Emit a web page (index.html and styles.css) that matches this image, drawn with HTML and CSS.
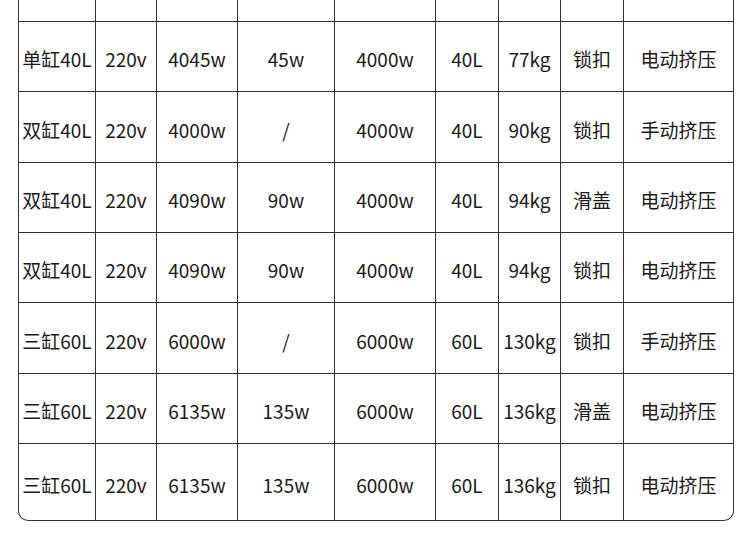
FILE: index.html
```html
<!DOCTYPE html>
<html lang="zh-CN">
<head>
<meta charset="utf-8">
<link rel="stylesheet" href="styles.css">
</head>
<body>
<div class="tbl">
  <div class="row top"><div></div><div></div><div></div><div></div><div></div><div></div><div></div><div></div><div></div></div>
  <div class="row h70"><div>单缸40L</div><div>220v</div><div>4045w</div><div>45w</div><div>4000w</div><div>40L</div><div>77kg</div><div>锁扣</div><div>电动挤压</div></div>
  <div class="row h71"><div>双缸40L</div><div>220v</div><div>4000w</div><div>/</div><div>4000w</div><div>40L</div><div>90kg</div><div>锁扣</div><div>手动挤压</div></div>
  <div class="row h70"><div>双缸40L</div><div>220v</div><div>4090w</div><div>90w</div><div>4000w</div><div>40L</div><div>94kg</div><div>滑盖</div><div>电动挤压</div></div>
  <div class="row h70"><div>双缸40L</div><div>220v</div><div>4090w</div><div>90w</div><div>4000w</div><div>40L</div><div>94kg</div><div>锁扣</div><div>电动挤压</div></div>
  <div class="row h71"><div>三缸60L</div><div>220v</div><div>6000w</div><div>/</div><div>6000w</div><div>60L</div><div>130kg</div><div>锁扣</div><div>手动挤压</div></div>
  <div class="row h70"><div>三缸60L</div><div>220v</div><div>6135w</div><div>135w</div><div>6000w</div><div>60L</div><div>136kg</div><div>滑盖</div><div>电动挤压</div></div>
  <div class="row last"><div>三缸60L</div><div>220v</div><div>6135w</div><div>135w</div><div>6000w</div><div>60L</div><div>136kg</div><div>锁扣</div><div>电动挤压</div></div>
</div>
</body>
</html>
```

FILE: styles.css
```css
html, body {
  margin: 0;
  padding: 0;
  background: #ffffff;
}
body {
  font-family: "Noto Sans CJK SC", "Noto Sans", sans-serif;
  color: #1a1a1a;
  font-size: 19px;
}
.tbl {
  margin-left: 18px;
  width: 716px;
  box-sizing: border-box;
  border-left: 1px solid #333;
  border-right: 1px solid #333;
  border-bottom: 1px solid #333;
  border-radius: 0 0 10px 10px;
  overflow: hidden;
}
.row {
  display: grid;
  grid-template-columns: 77px 61px 81px 97px 101px 63px 62px 63px 109px;
  box-sizing: border-box;
  border-bottom: 1px solid #333;
}
.row > div {
  box-sizing: border-box;
  border-right: 1px solid #333;
  display: flex;
  align-items: center;
  justify-content: center;
  white-space: nowrap;
  padding-top: 4px;
}
.row > div:last-child {
  border-right: none;
}
.top { height: 22px; }
.h70 { height: 70px; }
.h71 { height: 71px; }
.last { height: 76px; border-bottom: none; }
```
